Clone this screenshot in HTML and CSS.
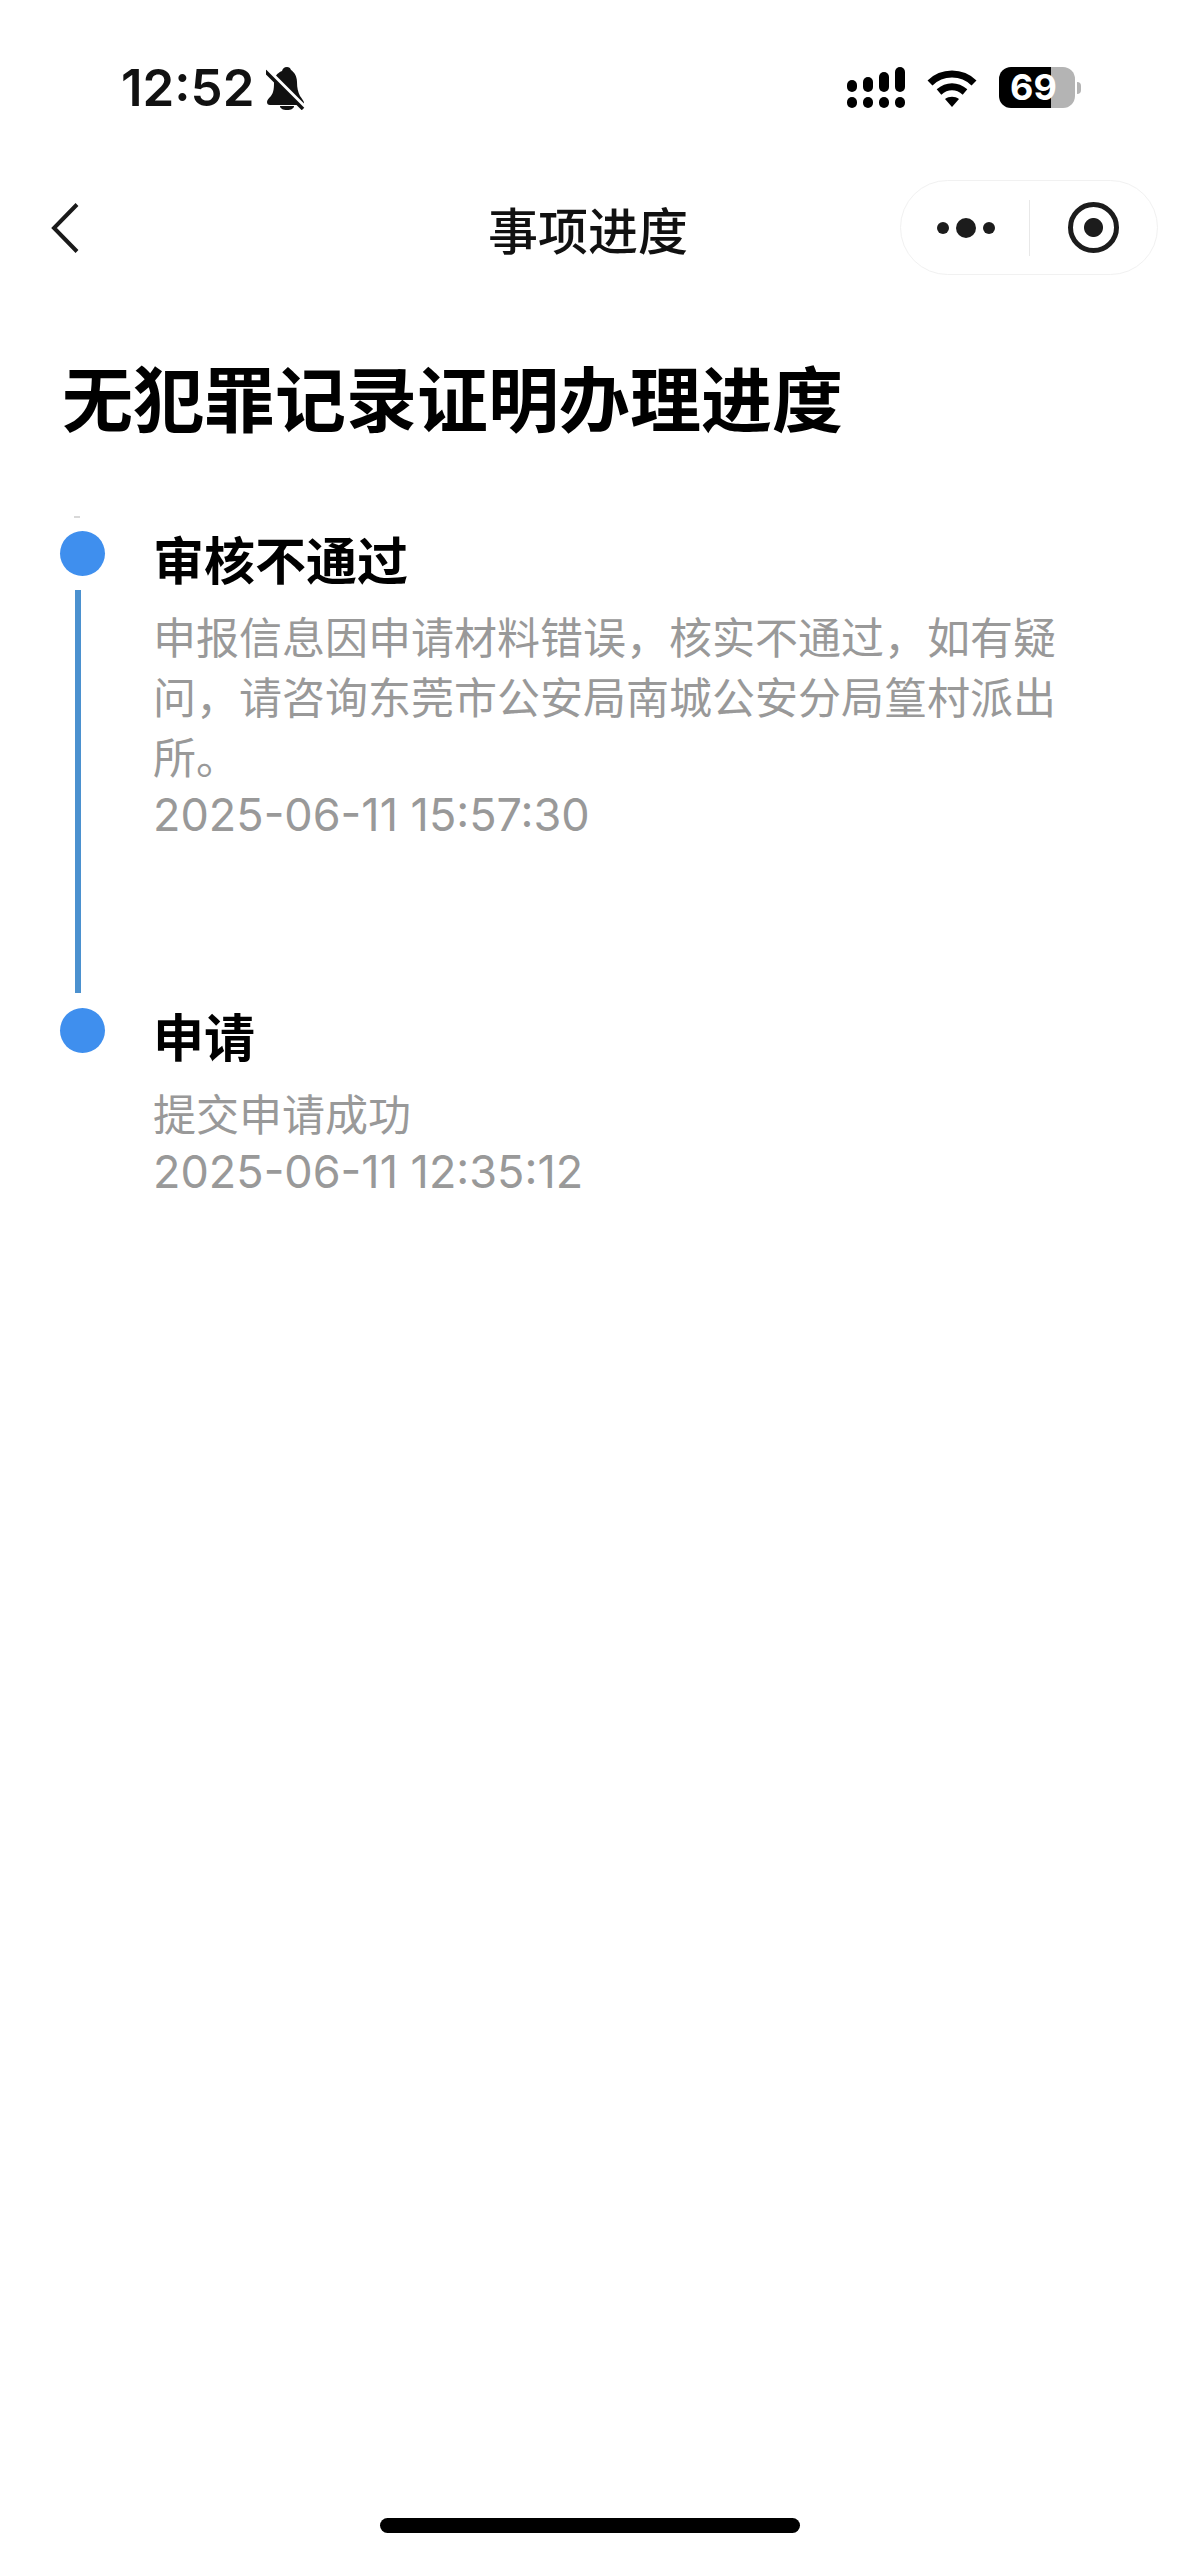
FILE: index.html
```html
<!DOCTYPE html>
<html lang="zh-CN">
<head>
  <meta charset="UTF-8" />
  <meta name="viewport" content="width=device-width, initial-scale=1.0" />
  <title>事项进度</title>
  <link rel="stylesheet" href="styles.css">
</head>
<body>
  <div class="page">
    <div class="status-bar">
      <div class="status-left">
        <span class="time">12:52</span>
        <svg class="bell" viewBox="0 0 42 44" width="42" height="44">
          <path fill="#111" d="M21 1c-3 0-4.500 2-5 4-5 2-8 6-8 12 0 7-1 10-3 13-2 2-4 4-4 6 0 2 1 3 3 3h31c2 0 3-1 3-2 0-2-2-4-4-7-2-4-3-8-3-14 0-6-3-10-6-12-.5-2-2-3-4-3z"/>
          <path fill="#111" d="M14 40h14c0 2.500-3 4-7 4s-7-1.500-7-4z"/>
          <path fill="none" stroke="#fff" stroke-width="5" d="M0 3 40 43"/>
          <path fill="none" stroke="#111" stroke-width="3.500" d="M-1 5 37 43"/>
        </svg>
      </div>
      <div class="status-right">
        <div class="signal">
          <div class="signal-col"><i class="bar bar-1"></i><i class="dot"></i></div>
          <div class="signal-col"><i class="bar bar-2"></i><i class="dot"></i></div>
          <div class="signal-col"><i class="bar bar-3"></i><i class="dot"></i></div>
          <div class="signal-col"><i class="bar bar-4"></i><i class="dot"></i></div>
        </div>
        <svg class="wifi" viewBox="0 0 50 38" width="50" height="38">
          <path fill="none" stroke="#000" stroke-width="7" d="M3 14C15 2 35 2 47 14"/>
          <path fill="none" stroke="#000" stroke-width="7" d="M12 23c8-7 18-7 26 0"/>
          <path fill="#000" d="M18 30c4-3 10-3 14 0l-7 8z"/>
        </svg>
        <div class="battery"><span>69</span></div>
        <i class="battery-nub"></i>
      </div>
    </div>

    <div class="nav-bar">
      <svg class="back" viewBox="0 0 28 50" width="28" height="50">
        <path fill="none" stroke="#1a1a1a" stroke-width="4" d="M26 1.500 3 25l23 23.500"/>
      </svg>
      <div class="nav-title">事项进度</div>
      <div class="capsule">
        <div class="capsule-more"><i class="small"></i><i class="big"></i><i class="small"></i></div>
        <div class="capsule-line"></div>
        <div class="capsule-close"><i></i></div>
      </div>
    </div>

    <h1 class="heading">无犯罪记录证明办理进度</h1>

    <div class="timeline">
      <div class="rail-tick"></div>
      <div class="step step-first">
        <div class="rail">
          <div class="node"></div>
          <div class="rail-line"></div>
        </div>
        <div class="step-body">
          <div class="step-title">审核不通过</div>
          <div class="step-text">申报信息因申请材料错误，核实不通过，如有疑问，请咨询东莞市公安局南城公安分局篁村派出所。</div>
          <div class="step-time">2025-06-11 15:57:30</div>
        </div>
      </div>
      <div class="step">
        <div class="rail">
          <div class="node"></div>
        </div>
        <div class="step-body">
          <div class="step-title">申请</div>
          <div class="step-text">提交申请成功</div>
          <div class="step-time">2025-06-11 12:35:12</div>
        </div>
      </div>
    </div>

    <div class="home-bar"></div>
  </div>
</body>
</html>
```

FILE: styles.css
```css
* {
  box-sizing: border-box;
}
body {
  margin: 0;
  background: #fff;
  color: #000;
  font-family: "Noto Sans CJK SC", "Inter", sans-serif;
}
.page {
  display: flex;
  flex-direction: column;
  height: 2556px;
  overflow: hidden;
}

/* status bar */
.status-bar {
  display: flex;
  justify-content: space-between;
  align-items: center;
  height: 67px;
  margin-top: 54px;
  padding: 0 98px 0 121px;
}
.status-left {
  display: flex;
  align-items: center;
  gap: 12px;
}
.time {
  font-family: "Inter", sans-serif;
  font-size: 51px;
  font-weight: 600;
  line-height: 67px;
  color: #111;
}
.status-right {
  display: flex;
  align-items: center;
}
.signal {
  display: flex;
  gap: 6px;
  margin-right: 22px;
}
.signal-col {
  display: flex;
  flex-direction: column;
  justify-content: flex-end;
  gap: 5px;
  height: 41px;
}
.signal-col i {
  display: block;
  width: 10px;
  background: #000;
  border-radius: 5px;
}
.signal-col .dot {
  height: 11px;
}
.bar-1 { height: 12px; }
.bar-2 { height: 15px; }
.bar-3 { height: 20px; }
.bar-4 { height: 25px; }
.wifi {
  margin-right: 22px;
}
.battery {
  width: 76px;
  height: 41px;
  border-radius: 12px;
  background: linear-gradient(90deg, #000 0, #000 52px, #b4b4b4 52px);
  text-align: center;
}
.battery span {
  font-family: "Inter", sans-serif;
  font-size: 36px;
  font-weight: 700;
  line-height: 41px;
  color: #fff;
  display: block;
  padding-right: 7px;
}
.battery-nub {
  display: block;
  width: 4px;
  height: 12px;
  margin-left: 2px;
  background: #b4b4b4;
  border-radius: 0 6px 6px 0;
}

/* nav bar */
.nav-bar {
  position: relative;
  display: flex;
  justify-content: center;
  align-items: center;
  height: 95px;
  margin-top: 59px;
}
.back {
  position: absolute;
  left: 51px;
  top: 23px;
}
.nav-title {
  font-size: 50px;
  font-weight: 500;
  color: #111;
  margin-right: 3px;
}
.capsule {
  position: absolute;
  left: 900px;
  top: 0;
  width: 258px;
  height: 95px;
  display: flex;
  align-items: center;
  border: 1px solid #f1f1f1;
  border-radius: 48px;
}
.capsule-more {
  display: flex;
  align-items: center;
  justify-content: center;
  gap: 7px;
  width: 128px;
  padding-left: 2px;
}
.capsule-more i {
  display: block;
  background: #1c1c1c;
  border-radius: 50%;
}
.capsule-more .small {
  width: 12px;
  height: 12px;
}
.capsule-more .big {
  width: 20px;
  height: 20px;
}
.capsule-line {
  width: 1px;
  height: 56px;
  background: #e8e8e8;
}
.capsule-close {
  display: flex;
  justify-content: center;
  align-items: center;
  flex: 1;
}
.capsule-close i {
  display: block;
  width: 51px;
  height: 51px;
  border: 5px solid #1c1c1c;
  border-radius: 50%;
  background: radial-gradient(circle, #1c1c1c 0, #1c1c1c 9px, #fff 10px);
}

/* page content */
.heading {
  margin: 74px 0 0 62px;
  font-size: 71px;
  font-weight: 700;
  line-height: 92px;
  color: #000;
}
.timeline {
  margin-top: 75px;
  padding-left: 60px;
}
.rail-tick {
  width: 6px;
  height: 2px;
  margin: 0 0 13px 14px;
  background: #d8d8d8;
}
.step {
  display: flex;
}
.step-first {
  height: 477px;
}
.rail {
  display: flex;
  flex-direction: column;
  width: 93px;
}
.node {
  width: 45px;
  height: 45px;
  background: #3f8fee;
  border-radius: 50%;
}
.rail-line {
  width: 6px;
  height: 403px;
  margin: 14px 0 0 15px;
  background: #4b91cf;
}
.step-body {
  width: 912px;
}
.step-title {
  font-size: 51px;
  font-weight: 700;
  line-height: 60px;
  margin-top: -3px;
  color: #000;
}
.step-text {
  margin-top: 17px;
  font-size: 43px;
  line-height: 60px;
  color: #999;
}
.step-time {
  font-family: "Inter", sans-serif;
  font-size: 45px;
  line-height: 60px;
  color: #999;
}

.home-bar {
  width: 420px;
  height: 15px;
  margin: auto auto 23px 380px;
  background: #000;
  border-radius: 8px;
}
```
